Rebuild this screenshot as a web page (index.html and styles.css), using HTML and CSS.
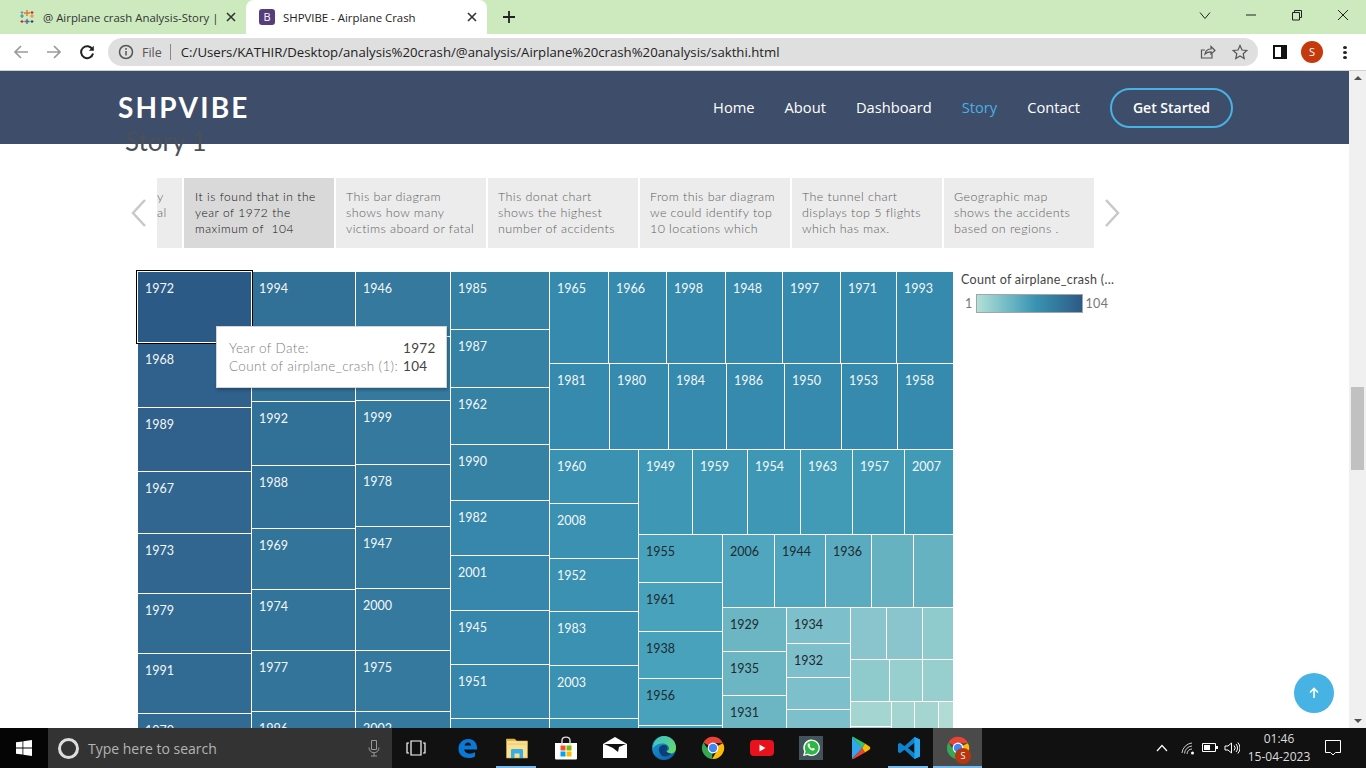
FILE: index.html
```html
<!DOCTYPE html>
<html lang="en">
<head>
    <meta charset="UTF-8">
    <meta name="viewport" content="width=device-width, initial-scale=1.0">
    <title>SHPVIBE - Airplane Crash</title>
    <link rel="stylesheet" href="styles.css">
</head>
<body>
    <svg class="defs" width="0" height="0">
        <symbol id="chrome" viewBox="0 0 24 24">
            <path d="M12 12 L2.400 6.500 A11 11 0 0 1 22 7.200 L12 7.200Z" fill="#ea4335"/>
            <path d="M12 12 L22 7.200 A11 11 0 0 1 11 23 L16.200 14.500Z" fill="#fbbc05"/>
            <path d="M12 12 L11 23 A11 11 0 0 1 2.400 6.500 L7.800 14.500Z" fill="#34a853"/>
            <circle cx="12" cy="12" r="5.400" fill="#fff"/>
            <circle cx="12" cy="12" r="4.200" fill="#4285f4"/>
        </symbol>
    </svg>

    <div class="tabbar">
        <div class="tab">
            <svg class="favicon" viewBox="0 0 16 16">
                <path d="M8 1v6M5 4h6" stroke="#e8762d" stroke-width="1.400"/>
                <path d="M8 10v5M5.500 12.500h5" stroke="#5b6591" stroke-width="1.400"/>
                <path d="M3 5v4M1 7h4" stroke="#59879b" stroke-width="1.200"/>
                <path d="M13 5v4M11 7h4" stroke="#eb912b" stroke-width="1.200"/>
                <path d="M3 11v3M1.500 12.500h3" stroke="#c72035" stroke-width="1.100"/>
                <path d="M13 2v3M11.500 3.500h3" stroke="#c72035" stroke-width="1.100"/>
                <path d="M3 2v3M1.500 3.500h3" stroke="#7099a6" stroke-width="1.100"/>
                <path d="M13 11v3M11.500 12.500h3" stroke="#1f447e" stroke-width="1.100"/>
            </svg>
            <span class="tab-title">@ Airplane crash Analysis-Story |</span>
            <svg class="tab-close" viewBox="0 0 10 10"><path d="M1 1l8 8M9 1l-8 8"/></svg>
        </div>
        <div class="tab tab-active">
            <span class="favicon-b">B</span>
            <span class="tab-title">SHPVIBE - Airplane Crash</span>
            <svg class="tab-close" viewBox="0 0 10 10"><path d="M1 1l8 8M9 1l-8 8"/></svg>
        </div>
        <svg class="new-tab" viewBox="0 0 12 12"><path d="M6 0v12M0 6h12"/></svg>
        <div class="win-controls">
            <svg viewBox="0 0 12 12"><path d="M1 3.500l5 6 5-6"/></svg>
            <svg viewBox="0 0 12 12"><path d="M1 6h10"/></svg>
            <svg viewBox="0 0 12 12"><path d="M1.500 3.500h7v7.500h-7zM3.500 3.500v-2h7v7h-2"/></svg>
            <svg viewBox="0 0 12 12"><path d="M1 1l10 10M11 1l-10 10"/></svg>
        </div>
    </div>

    <div class="toolbar">
        <svg class="tool tool-off" viewBox="0 0 16 16"><path d="M15 8H2M8 2L2 8l6 6"/></svg>
        <svg class="tool tool-off" viewBox="0 0 16 16"><path d="M1 8h13M8 2l6 6-6 6"/></svg>
        <svg class="tool tool-reload" viewBox="0 0 16 16"><path d="M13.500 5.500A6 6 0 1 0 14 9.500"/><path class="solid" d="M14.800 1.800v5h-5z"/></svg>
        <div class="omnibox">
            <svg class="info-icon" viewBox="0 0 16 16"><circle cx="8" cy="8" r="6.500"/><path d="M8 7v4.500M8 4v1.800"/></svg>
            <span class="scheme">File</span>
            <span class="omni-sep"></span>
            <span class="url">C:/Users/KATHIR/Desktop/analysis%20crash/@analysis/Airplane%20crash%20analysis/sakthi.html</span>
            <svg class="omni-icon" viewBox="0 0 16 16"><path d="M12 9.500V14H1.500V6H5"/><path d="M5 10c.5-3 3-5 6-5V2.500L15 6.500 11 10V7.800c-2.500 0-4.500.7-6 2.200z"/></svg>
            <svg class="omni-icon" viewBox="0 0 16 16"><path d="M8 1.500l2 4.500 4.800.5-3.600 3.200 1 4.800L8 12l-4.200 2.500 1-4.800L1.200 6.500 6 6z"/></svg>
        </div>
        <svg class="side-panel" viewBox="0 0 14 14"><path d="M1 1h12v12H1z" fill="none" stroke="#111" stroke-width="2"/><path d="M8 1h5v12H8z" fill="#111"/></svg>
        <div class="avatar">S</div>
        <div class="menu-dots"><i></i><i></i><i></i></div>
    </div>

    <div class="viewport">
        <div class="page">
            <header class="site-nav">
                <div class="logo">SHPVIBE</div>
                <nav class="nav-links">
                    <a>Home</a>
                    <a>About</a>
                    <a>Dashboard</a>
                    <a class="current">Story</a>
                    <a>Contact</a>
                    <a class="get-started">Get Started</a>
                </nav>
            </header>

            <h1 class="story-title">Story 1</h1>

            <div class="story-strip">
                <svg class="strip-arrow" viewBox="0 0 15 28"><path d="M14 1L2 14l12 13"/></svg>
                <div class="strip-cards">
                    <div class="strip-card strip-cut">y<br>al</div>
                    <div class="strip-card strip-active">It is found that in the<br>year of 1972 the<br>maximum of&nbsp; 104</div>
                    <div class="strip-card">This bar diagram<br>shows how many<br>victims aboard or fatal</div>
                    <div class="strip-card">This donat chart<br>shows the highest<br>number of accidents</div>
                    <div class="strip-card">From this bar diagram<br>we could identify top<br>10 locations which</div>
                    <div class="strip-card">The tunnel chart<br>displays top 5 flights<br>which has max.</div>
                    <div class="strip-card">Geographic map<br>shows the accidents<br>based on regions .</div>
                </div>
                <svg class="strip-arrow strip-next" viewBox="0 0 15 28"><path d="M1 1l12 13L1 27"/></svg>
            </div>

            <div class="chart-row">
                <div class="treemap">
                    <div class="tm-col" style="width:113px">
                        <div class="cell c-max selected" style="height:70px">1972</div>
                        <div class="cell c1a" style="height:64px">1968</div>
                        <div class="cell c1a" style="height:63px">1989</div>
                        <div class="cell c1b" style="height:61px">1967</div>
                        <div class="cell c1b" style="height:59px">1973</div>
                        <div class="cell c1c" style="height:59px">1979</div>
                        <div class="cell c1c" style="height:59px">1991</div>
                        <div class="cell c1c" style="height:59px">1970</div>
                    </div>
                    <div class="tm-col" style="width:103px">
                        <div class="cell c2a" style="height:64px">1994</div>
                        <div class="cell c2a" style="height:64px"></div>
                        <div class="cell c2a" style="height:63px">1992</div>
                        <div class="cell c2a" style="height:62px">1988</div>
                        <div class="cell c2b" style="height:60px">1969</div>
                        <div class="cell c2b" style="height:60px">1974</div>
                        <div class="cell c2b" style="height:60px">1977</div>
                        <div class="cell c2b" style="height:60px">1996</div>
                    </div>
                    <div class="tm-col" style="width:94px">
                        <div class="cell c3" style="height:64px">1946</div>
                        <div class="cell c3" style="height:63px"></div>
                        <div class="cell c3" style="height:63px">1999</div>
                        <div class="cell c3" style="height:61px">1978</div>
                        <div class="cell c3" style="height:61px">1947</div>
                        <div class="cell c3" style="height:61px">2000</div>
                        <div class="cell c3" style="height:60px">1975</div>
                        <div class="cell c3" style="height:60px">2002</div>
                    </div>
                    <div class="tm-col" style="width:98px">
                        <div class="cell c4a" style="height:57px">1985</div>
                        <div class="cell c4a" style="height:57px">1987</div>
                        <div class="cell c4a" style="height:56px">1962</div>
                        <div class="cell c4a" style="height:55px">1990</div>
                        <div class="cell c4b" style="height:54px">1982</div>
                        <div class="cell c4b" style="height:54px">2001</div>
                        <div class="cell c4b" style="height:53px">1945</div>
                        <div class="cell c4b" style="height:53px">1951</div>
                        <div class="cell c4b" style="height:50px"></div>
                    </div>
                    <div class="tm-col" style="width:403px">
                        <div class="tm-row">
                            <div class="cell c5" style="width:58px;height:91px">1965</div>
                            <div class="cell c5" style="width:57px;height:91px">1966</div>
                            <div class="cell c5" style="width:58px;height:91px">1998</div>
                            <div class="cell c5" style="width:56px;height:91px">1948</div>
                            <div class="cell c5" style="width:57px;height:91px">1997</div>
                            <div class="cell c5" style="width:55px;height:91px">1971</div>
                            <div class="cell c5" style="width:56px;height:91px">1993</div>
                        </div>
                        <div class="tm-row">
                            <div class="cell c5" style="width:59px;height:85px">1981</div>
                            <div class="cell c5" style="width:58px;height:85px">1980</div>
                            <div class="cell c5" style="width:57px;height:85px">1984</div>
                            <div class="cell c5" style="width:57px;height:85px">1986</div>
                            <div class="cell c5" style="width:56px;height:85px">1950</div>
                            <div class="cell c5" style="width:55px;height:85px">1953</div>
                            <div class="cell c5" style="width:55px;height:85px">1958</div>
                        </div>
                        <div class="tm-row">
                            <div class="tm-col" style="width:88px">
                                <div class="cell c6" style="height:53px">1960</div>
                                <div class="cell c6" style="height:54px">2008</div>
                                <div class="cell c6" style="height:52px">1952</div>
                                <div class="cell c6" style="height:53px">1983</div>
                                <div class="cell c6" style="height:52px">2003</div>
                                <div class="cell c6" style="height:50px"></div>
                            </div>
                            <div class="tm-col" style="width:314px">
                                <div class="tm-row">
                                    <div class="cell c7a" style="width:53px;height:84px">1949</div>
                                    <div class="cell c7a" style="width:54px;height:84px">1959</div>
                                    <div class="cell c7a" style="width:52px;height:84px">1954</div>
                                    <div class="cell c7b" style="width:51px;height:84px">1963</div>
                                    <div class="cell c7b" style="width:51px;height:84px">1957</div>
                                    <div class="cell c7b" style="width:48px;height:84px">2007</div>
                                </div>
                                <div class="tm-row">
                                    <div class="tm-col" style="width:83px">
                                        <div class="cell c8 dark" style="height:47px">1955</div>
                                        <div class="cell c8 dark" style="height:48px">1961</div>
                                        <div class="cell c8 dark" style="height:46px">1938</div>
                                        <div class="cell c8 dark" style="height:46px">1956</div>
                                        <div class="cell c8" style="height:30px"></div>
                                    </div>
                                    <div class="tm-col" style="width:230px">
                                        <div class="tm-row">
                                            <div class="cell c9a dark" style="width:51px;height:72px">2006</div>
                                            <div class="cell c9a dark" style="width:50px;height:72px">1944</div>
                                            <div class="cell c9b dark" style="width:45px;height:72px">1936</div>
                                            <div class="cell c9c" style="width:41px;height:72px"></div>
                                            <div class="cell c9c" style="width:39px;height:72px"></div>
                                        </div>
                                        <div class="tm-row">
                                            <div class="tm-col" style="width:63px">
                                                <div class="cell c10 dark" style="height:43px">1929</div>
                                                <div class="cell c10 dark" style="height:43px">1935</div>
                                                <div class="cell c10 dark" style="height:40px">1931</div>
                                            </div>
                                            <div class="tm-col" style="width:63px">
                                                <div class="cell c11 dark" style="height:35px">1934</div>
                                                <div class="cell c11 dark" style="height:33px">1932</div>
                                                <div class="cell c11" style="height:31px"></div>
                                                <div class="cell c11" style="height:30px"></div>
                                            </div>
                                            <div class="tm-col" style="width:102px">
                                                <div class="tm-row">
                                                    <div class="cell c12" style="width:35px;height:51px"></div>
                                                    <div class="cell c12" style="width:35px;height:51px"></div>
                                                    <div class="cell c13" style="width:30px;height:51px"></div>
                                                </div>
                                                <div class="tm-row">
                                                    <div class="cell c13" style="width:38px;height:41px"></div>
                                                    <div class="cell c14" style="width:32px;height:41px"></div>
                                                    <div class="cell c14" style="width:30px;height:41px"></div>
                                                </div>
                                                <div class="tm-row">
                                                    <div class="tm-col" style="width:40px">
                                                        <div class="cell c15" style="height:24px"></div>
                                                        <div class="cell c15" style="height:20px"></div>
                                                    </div>
                                                    <div class="cell c15" style="width:22px;height:45px"></div>
                                                    <div class="cell c15" style="width:23px;height:45px"></div>
                                                    <div class="cell c16" style="width:14px;height:45px"></div>
                                                </div>
                                            </div>
                                        </div>
                                    </div>
                                </div>
                            </div>
                        </div>
                    </div>
                    <div class="tooltip">
                        <span class="tip-key">Year of Date:</span><span class="tip-val tip-right">1972</span>
                        <span class="tip-key">Count of airplane_crash (1):</span><span class="tip-val">104</span>
                    </div>
                </div>

                <div class="legend">
                    <div class="legend-title">Count of airplane_crash (...</div>
                    <div class="legend-scale">
                        <span>1</span>
                        <div class="legend-bar"></div>
                        <span>104</span>
                    </div>
                </div>
            </div>

            <a class="back-top">
                <svg viewBox="0 0 12 12"><path d="M6 11V1.500M2 5.500l4-4 4 4"/></svg>
            </a>
        </div>

        <div class="scrollbar">
            <span class="sb-up"></span>
            <div class="sb-track"><div class="sb-thumb"></div></div>
            <span class="sb-down"></span>
        </div>
    </div>

    <div class="taskbar">
        <div class="start">
            <svg viewBox="0 0 16 16"><path d="M0 2.300l6.500-.9v6.200H0zM7.300 1.300L16 0v7.600H7.300zM0 8.400h6.500v6.200L0 13.700zM7.300 8.400H16V16l-8.700-1.300z" fill="#fff"/></svg>
        </div>
        <div class="search">
            <span class="cortana"></span>
            <span class="search-text">Type here to search</span>
            <svg class="mic" viewBox="0 0 12 18"><path d="M3.500 1.500h5v9h-5zM1 8.500c0 7 10 7 10 0M6 14v3M3 17h6"/></svg>
        </div>
        <div class="task-icons">
            <div class="slot slot-view">
                <svg viewBox="0 0 20 16"><path d="M5 1h10v14H5zM3 3H1v10h2M17 3h2v10h-2" fill="none" stroke="#fff" stroke-width="1.200"/></svg>
            </div>
            <div class="slot">
                <svg viewBox="0 0 24 24"><path d="M3 13.500h18c.6-6-3-10.500-8.500-10.500C6 3 2.500 7.500 2.500 13c0 6 5 9 10 9 2.500 0 4.500-.5 6.500-1.500v-4.500c-3.500 2.500-9.500 2.500-11-2.500zM8.500 9.500c.5-2 2-3 3.500-3s3 1 3.200 3z" fill="#0a78d7" fill-rule="evenodd"/></svg>
            </div>
            <div class="slot running">
                <svg viewBox="0 0 24 24">
                    <path d="M1.500 3h8l2 2h11v17h-21z" fill="#fbe08f" stroke="#c9a95a" stroke-width=".6"/>
                    <path d="M1.500 3h8l2 2h-10z" fill="#e6b23f"/>
                    <path d="M1.500 8h21" stroke="#e6c677"/>
                    <path d="M6 22v-7.500c0-1 .5-1.500 1.500-1.500h9c1 0 1.500.5 1.500 1.500V22h-3.500v-4.500h-5V22z" fill="#35afe6"/>
                </svg>
            </div>
            <div class="slot">
                <svg viewBox="0 0 24 24">
                    <path d="M1 7h22v15c0 1-.5 1.500-1.500 1.500h-19C1.500 23.500 1 23 1 22z" fill="#fff"/>
                    <path d="M8 9V4.500c0-4.500 8-4.500 8 0V9" fill="none" stroke="#ddd" stroke-width="1.400"/>
                    <path d="M6.500 9.500h5v5h-5z" fill="#f25022"/>
                    <path d="M12.500 9.500h5v5h-5z" fill="#7fba00"/>
                    <path d="M6.500 15.500h5v5h-5z" fill="#00a4ef"/>
                    <path d="M12.500 15.500h5v5h-5z" fill="#ffb900"/>
                </svg>
            </div>
            <div class="slot">
                <svg viewBox="0 0 24 24">
                    <path d="M0 8l12-7 12 7v14H0z" fill="#fff"/>
                    <path d="M1 8h22l-7 3-1 5-5-4z" fill="#111"/>
                </svg>
            </div>
            <div class="slot">
                <svg viewBox="0 0 24 24">
                    <defs>
                        <linearGradient id="edge-g" x1="0" y1="0" x2="1" y2="1">
                            <stop offset="0" stop-color="#1b9ad6"/>
                            <stop offset="1" stop-color="#0c59a4"/>
                        </linearGradient>
                        <linearGradient id="edge-h" x1="0" y1="0" x2="1" y2="1">
                            <stop offset="0" stop-color="#35c1d4"/>
                            <stop offset="1" stop-color="#6fdc55"/>
                        </linearGradient>
                    </defs>
                    <circle cx="12" cy="12" r="12" fill="url(#edge-g)"/>
                    <path d="M12 0a12 12 0 0 1 12 12c0 3-2 5.500-5 5.500-2.500 0-4-1-4.500-2.500 2 0 2.500-1 2.500-2.500 0-3-3-5-6.500-5C6.500 7.500 3 9 1 12 1 5 6 0 12 0z" fill="url(#edge-h)"/>
                    <path d="M7 13.500c0-3 2.500-4.500 5-4.500 2 0 3.500 1 3.500 3 0 1-.5 2-1.500 2.500.5 2 3 3 5 3-1 1.500-3.500 3-6.500 3-3 0-5.500-3.500-5.500-7z" fill="#0c3f77"/>
                </svg>
            </div>
            <div class="slot"><svg viewBox="0 0 24 24"><use href="#chrome"/></svg></div>
            <div class="slot">
                <svg viewBox="0 0 24 24">
                    <rect x="0" y="4" width="24" height="16" rx="4" fill="#e8121d"/>
                    <path d="M9.500 8.500l6 3.500-6 3.500z" fill="#fff"/>
                </svg>
            </div>
            <div class="slot">
                <svg viewBox="0 0 24 24">
                    <rect width="24" height="24" fill="#42535c"/>
                    <path d="M4 20l1.200-4.400A8.300 8.300 0 1 1 8.500 19z" fill="#fff"/>
                    <path d="M5.800 18.400l.9-3.200A6.900 6.900 0 1 1 9 17.600z" fill="#2bb741"/>
                    <path d="M9.500 7.500c-1.500 1-1 3 .8 5 2 2 3.800 2.600 5 1.500l.6-1.300-2-1-.9 1c-1-.4-2-1.400-2.500-2.600l.8-.8-.9-2z" fill="#fff"/>
                </svg>
            </div>
            <div class="slot">
                <svg viewBox="0 0 24 24">
                    <path d="M4 1l10.500 11L4 23z" fill="#2fa8f0"/>
                    <path d="M4 1c.5-.4 1-.3 2 .2l11 6.300-2.800 4.500z" fill="#36c46f"/>
                    <path d="M4 23c.5.4 1 .3 2-.2l11-6.300-2.800-4.500z" fill="#e94335"/>
                    <path d="M17 7.500l4.500 3c1 .8 1 2.200 0 3l-4.500 3-2.800-4.500z" fill="#fbbc05"/>
                </svg>
            </div>
            <div class="slot running">
                <svg viewBox="0 0 24 24">
                    <path d="M17.500 1L23 3.600v16.800L17.500 23 7.500 13.800 3 17.300 1 16V8l2-1.300 4.500 3.500z" fill="#0e83cf"/>
                    <path d="M17.500 6.800L11 12l6.500 5.200z" fill="#111"/>
                    <path d="M17.500 1L23 3.600v16.800L17.500 23z" fill="#27a6ec"/>
                </svg>
            </div>
            <div class="slot slot-active running">
                <svg viewBox="0 0 24 24"><use href="#chrome"/></svg>
                <span class="badge-s">S</span>
            </div>
        </div>
        <div class="tray">
            <svg class="tray-caret" viewBox="0 0 12 8"><path d="M1 7l5-5.500L11 7"/></svg>
            <svg class="tray-icon tray-wifi" viewBox="0 0 16 16"><path d="M2 13a11 11 0 0 1 10-10M4.500 13.500a8 8 0 0 1 7.500-7.500M7 14a5 5 0 0 1 5-5" fill="none" stroke="#ccc"/><circle cx="12.500" cy="13" r="1.500" fill="#fff"/></svg>
            <svg class="tray-icon" viewBox="0 0 16 16"><path d="M.5 3.500h13v8H.5z" fill="none" stroke="#fff"/><path d="M2 5h6v5H2zM14 6h2v3h-2z" fill="#fff"/></svg>
            <svg class="tray-icon" viewBox="0 0 16 16"><path d="M1 6h3l3.500-3v10L4 10H1z" fill="none" stroke="#fff"/><path d="M10 5.500a3.500 3.500 0 0 1 0 5M12 4a6 6 0 0 1 0 8M13.800 2.500a8 8 0 0 1 0 11" fill="none" stroke="#fff"/></svg>
            <div class="clock"><span>01:46</span><span>15-04-2023</span></div>
            <svg class="notify" viewBox="0 0 16 16"><path d="M.5.500h15v12h-5L8 15l-2.500-2.500h-5z" fill="none" stroke="#fff"/></svg>
        </div>
    </div>
</body>
</html>
```

FILE: styles.css
```css
* {
    margin: 0;
    padding: 0;
    box-sizing: border-box;
}

html, body {
    width: 1366px;
    height: 768px;
    overflow: hidden;
}

body {
    display: flex;
    flex-direction: column;
    background-color: #fff;
    font-family: "Open Sans", sans-serif;
}

.defs {
    position: absolute;
}

/* browser tabs */
.tabbar {
    height: 34px;
    flex: none;
    display: flex;
    background-color: #cdeabf;
    padding-left: 8px;
}

.tab {
    width: 238px;
    height: 34px;
    display: flex;
    align-items: center;
    padding: 0 8px 0 11px;
    font-size: 11.400px;
    color: #333;
}

.tab-active {
    width: 241px;
    background-color: #fff;
    border-radius: 8px 8px 0 0;
    padding-left: 13px;
    color: #222;
}

.favicon {
    width: 16px;
    height: 16px;
    flex: none;
}

.favicon-b {
    width: 16px;
    height: 16px;
    flex: none;
    background-color: #563d7c;
    border-radius: 3px;
    color: #fff;
    font-size: 11px;
    line-height: 16px;
    text-align: center;
}

.tab-title {
    flex: 1;
    margin-left: 8px;
    white-space: nowrap;
}

.tab-close {
    width: 10px;
    height: 10px;
    flex: none;
    margin-right: 2px;
    fill: none;
    stroke: #333;
    stroke-width: 1.600;
}

.new-tab {
    width: 12px;
    height: 12px;
    margin: 11px 0 0 16px;
    fill: none;
    stroke: #222;
    stroke-width: 1.800;
}

.win-controls {
    margin-left: auto;
    display: flex;
    gap: 34px;
    padding: 9px 17px 0 0;
}

.win-controls svg {
    width: 12px;
    height: 12px;
    fill: none;
    stroke: #222;
    stroke-width: 1;
}

/* address bar */
.toolbar {
    height: 37px;
    flex: none;
    display: flex;
    align-items: center;
    background-color: #fff;
    border-bottom: 1px solid #d0d0d0;
    padding-left: 13px;
}

.tool {
    width: 16px;
    height: 16px;
    margin-right: 17px;
    fill: none;
    stroke: #222;
    stroke-width: 2;
}

.tool-off {
    stroke: #9a9a9a;
    stroke-width: 1.700;
}

.tool-reload {
    margin-right: 13px;
}

.tool .solid {
    fill: #222;
    stroke: none;
}

.omnibox {
    width: 1150px;
    height: 28px;
    display: flex;
    align-items: center;
    background-color: #dfdfdf;
    border-radius: 14px;
    padding: 0 10px;
    font-size: 12.500px;
}

.info-icon {
    width: 16px;
    height: 16px;
    flex: none;
    fill: none;
    stroke: #555;
    stroke-width: 1.500;
}

.scheme {
    margin-left: 8px;
    color: #555;
}

.omni-sep {
    width: 1px;
    height: 16px;
    margin: 0 10px 0 8px;
    background-color: #888;
}

.url {
    color: #222;
    flex: 1;
    font-size: 13.200px;
    white-space: nowrap;
}

.omni-icon {
    width: 16px;
    height: 16px;
    flex: none;
    margin-left: 16px;
    fill: none;
    stroke: #555;
    stroke-width: 1.200;
}

.side-panel {
    width: 14px;
    height: 14px;
    margin-left: 15px;
}

.avatar {
    width: 22px;
    height: 22px;
    margin-left: 14px;
    background-color: #c5390c;
    border-radius: 50%;
    color: #fff;
    font-size: 11px;
    line-height: 22px;
    text-align: center;
}

.menu-dots {
    margin-left: 20px;
    display: flex;
    flex-direction: column;
    gap: 2px;
}

.menu-dots i {
    width: 4px;
    height: 3px;
    background-color: #222;
    border-radius: 50%;
}

/* page area */
.viewport {
    height: 657px;
    flex: none;
    display: flex;
    overflow: hidden;
}

.page {
    width: 1349px;
    flex: none;
    overflow: hidden;
}

.site-nav {
    height: 73px;
    display: flex;
    align-items: center;
    justify-content: space-between;
    background-color: #3e4d6a;
    padding: 0 116px 0 118px;
}

.logo {
    margin-top: -2px;
    font-family: "Lato", sans-serif;
    font-size: 28px;
    font-weight: 700;
    letter-spacing: 2.200px;
    color: #fff;
}

.nav-links {
    display: flex;
    align-items: center;
    gap: 30px;
    font-size: 14.700px;
    color: #fff;
}

.nav-links a {
    padding-bottom: 2px;
}

.nav-links .current {
    color: #47b2e4;
}

.nav-links .get-started {
    width: 123px;
    height: 40px;
    padding: 0;
    border: 2px solid #47b2e4;
    border-radius: 20px;
    font-size: 14px;
    font-weight: 600;
    line-height: 36px;
    text-align: center;
}

.story-title {
    margin: -17px 0 0 125px;
    height: 28px;
    position: relative;
    font-family: "Lato", sans-serif;
    font-size: 26px;
    font-weight: 400;
    line-height: 28px;
    color: #4a5058;
}

.story-strip {
    display: flex;
    margin: 23px 0 0 131px;
    height: 70px;
    align-items: center;
}

.strip-arrow {
    width: 15px;
    height: 28px;
    flex: none;
    fill: none;
    stroke: #c8c8c8;
    stroke-width: 2.500;
}

.strip-next {
    margin-left: 11px;
}

.strip-cards {
    display: flex;
    gap: 2px;
    margin-left: 11px;
}

.strip-card {
    width: 150px;
    height: 70px;
    background-color: #ececec;
    padding: 11px 0 0 10px;
    font-family: "Lato", sans-serif;
    font-size: 12.500px;
    font-weight: 300;
    letter-spacing: 0.400px;
    line-height: 16px;
    white-space: nowrap;
    color: #5f5f5f;
}

.strip-active {
    background-color: #d9d9d9;
    padding-left: 11px;
    font-size: 12px;
    letter-spacing: 0.550px;
    color: #111;
}

.strip-cut {
    width: 25px;
    padding-left: 0;
    overflow: hidden;
}

.chart-row {
    display: flex;
    margin: 24px 0 0 138px;
}

/* treemap */
.treemap {
    width: 815px;
    flex: none;
    position: relative;
    display: flex;
    gap: 1px;
    background-color: #fff;
    align-items: flex-start;
}

.tm-col {
    display: flex;
    flex-direction: column;
    gap: 1px;
    flex: none;
}

.tm-row {
    display: flex;
    gap: 1px;
}

.cell {
    flex: none;
    padding: 9px 0 0 7px;
    font-family: "Lato", sans-serif;
    font-size: 12.500px;
    line-height: 16px;
    color: #f4f7f8;
    overflow: hidden;
}

.dark {
    color: #1d2a30;
}

.selected {
    position: relative;
    box-shadow: 0 0 0 1px #fff, 0 0 0 2px #000;
}

.c-max { background-color: #2c5a86; }
.c1a { background-color: #2f618c; }
.c1b { background-color: #30668f; }
.c1c { background-color: #316b93; }
.c2a { background-color: #327197; }
.c2b { background-color: #33759a; }
.c3 { background-color: #357a9e; }
.c4a { background-color: #3582a5; }
.c4b { background-color: #3687ab; }
.c5 { background-color: #368aae; }
.c6 { background-color: #3a91b1; }
.c7a { background-color: #3e97b5; }
.c7b { background-color: #419bb7; }
.c8 { background-color: #49a2bb; }
.c9a { background-color: #50a6be; }
.c9b { background-color: #5aabc0; }
.c9c { background-color: #66b2c1; }
.c10 { background-color: #6cb6c3; }
.c11 { background-color: #7dbfcb; }
.c12 { background-color: #8ac5cd; }
.c13 { background-color: #8fcacd; }
.c14 { background-color: #97cfcf; }
.c15 { background-color: #a4d5d0; }
.c16 { background-color: #b1dcd5; }

.tooltip {
    position: absolute;
    left: 78px;
    top: 54px;
    width: 231px;
    height: 62px;
    display: grid;
    grid-template-columns: 170px 1fr;
    column-gap: 4px;
    align-content: center;
    padding: 0 12px 1px 12px;
    background-color: #fff;
    border: 1px solid #d4d4d4;
    box-shadow: 1px 2px 3px rgba(0, 0, 0, 0.25);
    font-family: "Lato", sans-serif;
    font-size: 13.500px;
    letter-spacing: 0.350px;
    line-height: 18px;
    white-space: nowrap;
}

.tip-key {
    color: #7f7f7f;
    font-weight: 300;
}

.tip-val {
    color: #444;
}

.tip-right {
    text-align: right;
}

/* legend */
.legend {
    margin-left: 8px;
    font-family: "Lato", sans-serif;
    font-size: 12.500px;
    letter-spacing: 0.300px;
    color: #444;
}

.legend-title {
    line-height: 16px;
    white-space: nowrap;
}

.legend-scale {
    display: flex;
    align-items: center;
    margin-top: 6px;
    color: #777;
}

.legend-scale span:first-child {
    margin-left: 4px;
}

.legend-bar {
    width: 107px;
    height: 19px;
    margin: 0 3px 0 3px;
    border: 1px solid #a5a5a5;
    background: linear-gradient(to right, #b3e0d6, #6fb9c5 30%, #3a94b3 55%, #2c5a86);
}

.back-top {
    position: fixed;
    left: 1294px;
    top: 673px;
    width: 40px;
    height: 40px;
    display: flex;
    align-items: center;
    justify-content: center;
    background-color: #47b2e4;
    border-radius: 50%;
}

.back-top svg {
    width: 12px;
    height: 12px;
    fill: none;
    stroke: #fff;
    stroke-width: 1.600;
}

/* page scrollbar */
.scrollbar {
    width: 17px;
    flex: none;
    display: flex;
    flex-direction: column;
    align-items: center;
    background-color: #f0f0f0;
}

.sb-up, .sb-down {
    width: 0;
    height: 0;
    flex: none;
    border-left: 4px solid transparent;
    border-right: 4px solid transparent;
}

.sb-up {
    margin-top: 5px;
    border-bottom: 4px solid #505050;
}

.sb-down {
    margin-bottom: 5px;
    border-top: 4px solid #505050;
}

.sb-track {
    flex: 1;
    width: 100%;
    padding: 307px 2px 0;
}

.sb-thumb {
    width: 13px;
    height: 83px;
    background-color: #c1c1c1;
}

/* windows taskbar */
.taskbar {
    height: 40px;
    flex: none;
    display: flex;
    background-color: #111;
}

.start {
    width: 48px;
    display: flex;
    align-items: center;
    justify-content: center;
    background-color: #050505;
}

.start svg {
    width: 16px;
    height: 16px;
}

.search {
    width: 344px;
    display: flex;
    align-items: center;
    padding: 0 12px 0 10px;
    background-color: #333;
}

.cortana {
    width: 21px;
    height: 21px;
    flex: none;
    border: 3px solid #ddd;
    border-radius: 50%;
}

.search-text {
    flex: 1;
    margin-left: 9px;
    font-size: 14px;
    color: #b4b4b4;
}

.mic {
    width: 12px;
    height: 18px;
    fill: none;
    stroke: #999;
    stroke-width: 1;
}

.task-icons {
    display: flex;
}

.slot {
    width: 49px;
    height: 40px;
    position: relative;
    display: flex;
    align-items: center;
    justify-content: center;
}

.slot-view {
    width: 51px;
    padding-right: 3px;
}

.slot svg {
    width: 24px;
    height: 24px;
}

.slot-view svg {
    width: 20px;
    height: 16px;
}

.running::after {
    content: "";
    position: absolute;
    left: 4px;
    right: 5px;
    bottom: 0;
    height: 2px;
    background-color: #76b9ed;
}

.slot-active {
    background-color: #4a4a4a;
}

.slot-active::after {
    left: 0;
    right: 0;
}

.badge-s {
    position: absolute;
    left: 22px;
    top: 20px;
    width: 16px;
    height: 16px;
    background-color: #b8360e;
    border-radius: 50%;
    color: #fff;
    font-size: 9px;
    line-height: 16px;
    text-align: center;
}

.tray {
    margin-left: auto;
    display: flex;
    align-items: center;
    padding-right: 25px;
}

.tray-caret {
    width: 12px;
    height: 8px;
    fill: none;
    stroke: #fff;
    stroke-width: 1.200;
}

.tray-icon {
    width: 16px;
    height: 16px;
    margin-left: 6px;
}

.tray-wifi {
    margin-left: 12px;
}

.clock {
    width: 70px;
    margin: 0 11px 0 4px;
    display: flex;
    flex-direction: column;
    align-items: center;
    font-size: 12px;
    line-height: 18px;
    color: #ddd;
}

.notify {
    width: 16px;
    height: 16px;
}
```
